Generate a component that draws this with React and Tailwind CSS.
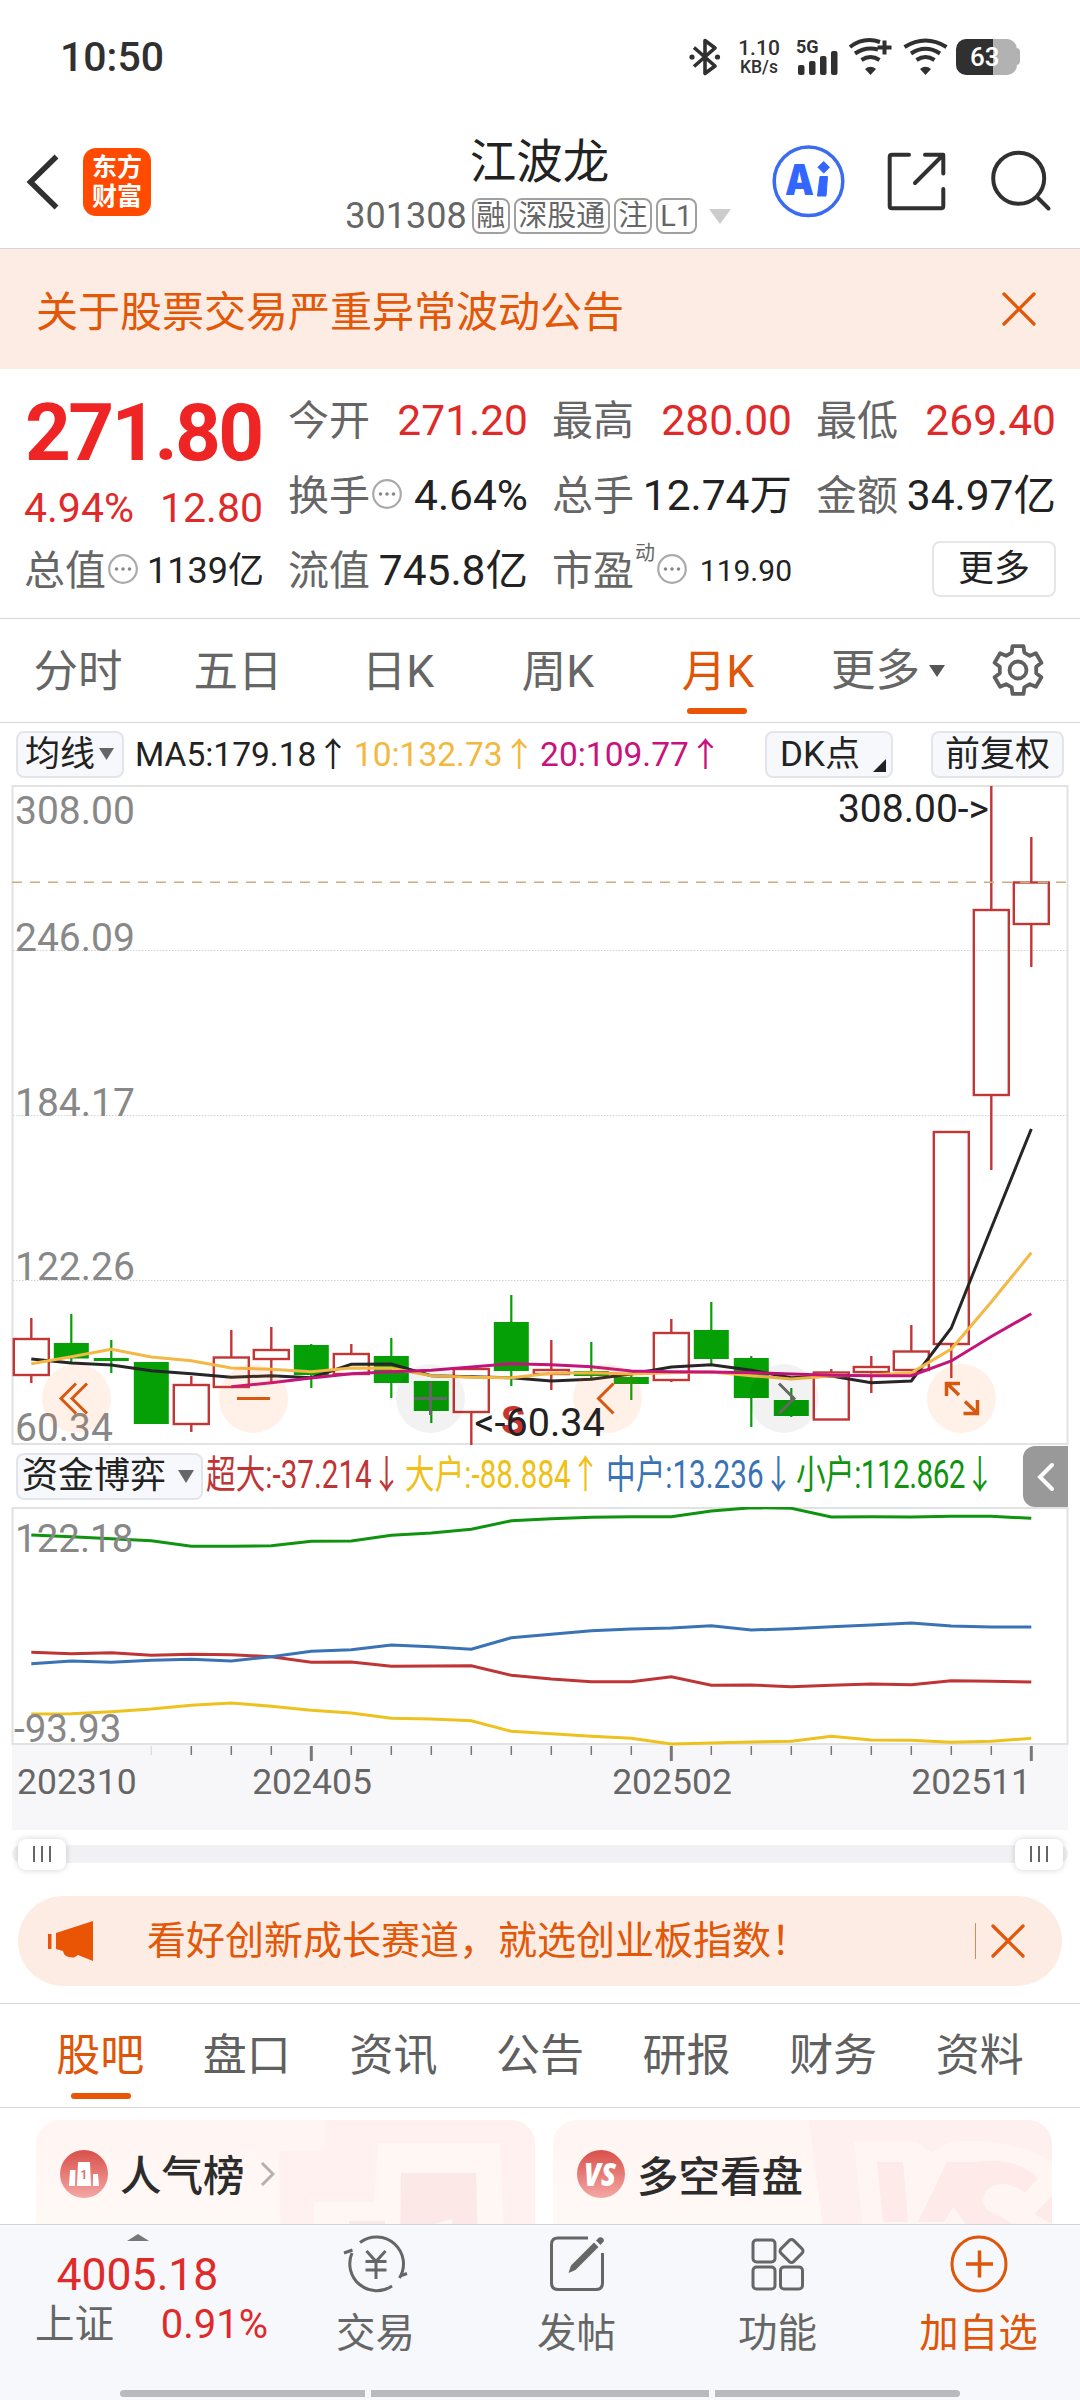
import React from "react";
import clsx from "clsx";

// x centre of the i-th candle
const cx = (i) => 31.3 + i * 40;

// [up, high, bodyTop, bodyBottom, low]
const candles = [
  [1, 1318, 1339, 1375, 1383],
  [0, 1314, 1343, 1358.5, 1362],
  [0, 1340, 1358, 1361, 1373],
  [0, 1362, 1362, 1424, 1424],
  [1, 1376, 1385, 1424, 1432],
  [1, 1330, 1357.5, 1387, 1387],
  [1, 1327, 1350, 1359, 1383],
  [0, 1344, 1345, 1375, 1388],
  [1, 1344, 1354, 1374, 1374],
  [0, 1338, 1356, 1383, 1398],
  [0, 1381, 1381, 1411, 1423],
  [1, 1369, 1369, 1412, 1445],
  [0, 1295, 1322, 1371, 1386],
  [1, 1340, 1370, 1374, 1390],
  [0, 1342, 1371, 1376, 1378],
  [0, 1375, 1377, 1384, 1400],
  [1, 1319, 1333, 1380, 1382],
  [0, 1302, 1330, 1359, 1365],
  [0, 1356, 1358, 1398, 1427],
  [0, 1388, 1400, 1416, 1417],
  [1, 1369, 1372.5, 1419.5, 1419.5],
  [1, 1356, 1367, 1372, 1393],
  [1, 1325, 1351.5, 1370, 1370],
  [1, 1132, 1132, 1344, 1378],
  [1, 786, 910, 1095, 1170],
  [1, 837, 882.5, 924, 967],
];

const ma5 = [1359, 1363, 1365, 1370.7, 1373.7, 1377.3, 1375.7, 1377.7, 1364.3, 1364, 1375.7, 1376.7, 1377.7, 1381, 1379.3, 1374, 1367, 1364.7, 1370.3, 1377.7, 1376, 1382.7, 1381, 1328, 1228, 1129];
const ma10 = [1363.7, 1356.7, 1349.3, 1357, 1360.7, 1368, 1369.3, 1371.7, 1368, 1368.3, 1375.7, 1377.3, 1377.7, 1373.3, 1372.7, 1374, 1372.7, 1372, 1375.7, 1379, 1376, 1375, 1372.7, 1349, 1302, 1252.7];
const ma20 = [1386.7, 1382.7, 1378, 1373.7, 1371.7, 1370.3, 1367, 1363.7, 1364.7, 1366.7, 1371, 1371.7, 1372, 1372.7, 1374, 1375.3, 1375.7, 1375.7, 1361, 1336.5, 1313.7];

const small = [27, 28.7, 30.7, 32.7, 38.3, 38.3, 37.7, 33.3, 33, 27.3, 25, 21.3, 12.7, 10.7, 9.3, 8.7, 8.7, 3, -0.3, 0.3, 9, 8.7, 9, 8.3, 8.3, 10.3];
const middle = [155.7, 153, 154.3, 152.3, 151.3, 153, 148.7, 143.3, 141.7, 137, 138.7, 141.3, 129.7, 126.3, 122.7, 121, 120, 117.7, 122, 120.7, 118.7, 117, 115, 118, 119, 119];
const huge = [144.3, 145.7, 144.7, 147.3, 146.3, 146.7, 148.7, 154.3, 154, 158.3, 158, 157.7, 167.3, 171, 173.7, 173.7, 168.7, 177.3, 177, 178.7, 177.3, 176, 176.7, 172.7, 173.3, 174];
const big = [206, 205.7, 203.7, 201, 197.3, 195, 198.3, 202.3, 205, 210.3, 211, 212.7, 223.3, 225.7, 228.3, 230.3, 236, 235, 234, 233.3, 228.3, 232, 232.3, 234.3, 233.3, 230.3];

const toPoints = (ys, from = 0) => ys.map((y, i) => `${cx(i + from)},${y}`).join(" ");

// Six-tooth gear outline around 0,0
const gearPath = () => {
  const pts = [];
  for (let t = 0; t < 6; t++) {
    [[-20, 18.5], [-13, 24.5], [13, 24.5], [20, 18.5]].forEach(([d, r]) => {
      const a = ((t * 60 + d - 90) * Math.PI) / 180;
      pts.push(`${(r * Math.cos(a)).toFixed(1)} ${(r * Math.sin(a)).toFixed(1)}`);
    });
  }
  return `M${pts.join("L")}Z`;
};

function Wifi({ plus }) {
  return (
    <svg width="46" height="38" viewBox="0 0 46 38" fill="none" stroke="#303030" strokeWidth="4">
      <path d={plus ? "M2 9 Q16 -1.500 32 4" : "M1.500 9 Q22.500 -4 43.500 9"} />
      <path d={plus ? "M7 15.500 Q18 8 30 11.500" : "M8 15.500 Q22.500 6 37 15.500"} />
      <path d="M13.500 22 Q22.500 16 31.500 22" />
      <path d="M22.500 37 L17 31 Q22.500 26.500 28 31 Z" fill="#303030" stroke="none" />
      {plus && <path d="M36.500 2.500 V16.500 M29.500 9.500 H43.500" />}
    </svg>
  );
}

function StatusBar() {
  return (
    <div className="h-[110px] shrink-0 flex items-start pt-[36px] pl-[60px] pr-[63px] text-[#303030]">
      <span className="text-[41px] leading-[42px] font-medium">10:50</span>
      <div className="ml-auto flex pt-[2px]">
        <svg width="32" height="38" viewBox="0 0 32 38" fill="none" stroke="#303030" strokeWidth="3.6">
          <path d="M5 9.500 L26 28 L16 35.500 V2.500 L26 10 L5 28.500" strokeLinejoin="round" />
          <circle cx="3" cy="19" r="2.600" fill="#303030" stroke="none" />
          <circle cx="28.500" cy="19" r="2.600" fill="#303030" stroke="none" />
        </svg>
        <div className="ml-[17px] w-[42px] flex flex-col items-center font-medium">
          <span className="text-[21px] leading-[20px]">1.10</span>
          <span className="mt-px text-[17.5px] leading-[17px]">KB/s</span>
        </div>
        <svg className="ml-[16px] overflow-visible" width="44" height="38" viewBox="0 0 44 38" fill="#303030">
          <text x="0" y="14.500" fontSize="18" fontWeight="700">5G</text>
          <rect x="2" y="27" width="6.500" height="10" rx="2" />
          <rect x="13" y="23" width="6.500" height="14" rx="2" />
          <rect x="24" y="18" width="6.500" height="19" rx="2" />
          <rect x="35" y="13" width="6.500" height="24" rx="2" />
        </svg>
        <div className="ml-[8px] flex gap-[9px]">
          <Wifi plus />
          <Wifi />
        </div>
        <div className="ml-[7px] mt-px w-[61px] h-[36px] relative flex items-center">
          <div className="w-[61px] h-[36px] rounded-[10px] overflow-hidden flex">
            <div className="w-[37px] bg-[#303030]" />
            <div className="flex-1 bg-[#b2b2b2]" />
          </div>
          <span className="absolute left-[14px] top-[4px] text-white text-[26px] leading-[28px] font-medium">63</span>
          <i className="absolute -right-[3px] top-[9px] w-[4px] h-[17px] rounded-r bg-[#b2b2b2]" />
        </div>
      </div>
    </div>
  );
}

function Tag({ children }) {
  return (
    <span className="h-[36px] px-[2.5px] rounded-[8px] border-2 border-[#a0a0a0] text-[29px] leading-[32px] flex items-center">
      {children}
    </span>
  );
}

function Header() {
  return (
    <header className="h-[139px] shrink-0 border-b border-[#d4d4da] grid grid-cols-[310px_460px_310px]">
      <div className="flex items-start pt-[38px] pl-[25px]">
        <svg width="36" height="68" viewBox="0 0 36 68" fill="none" stroke="#303030" strokeWidth="5.5">
          <path d="M31.500 8.500 L5.500 34 L31.500 59.500" />
        </svg>
        <div className="ml-[22px] w-[68px] h-[68px] rounded-[13px] bg-[#ff4a00] text-white text-[25px] leading-[29px] font-bold flex flex-col items-center justify-center">
          <span>东方</span>
          <span>财富</span>
        </div>
      </div>
      <div className="flex flex-col items-center">
        <h1 className="mt-[24px] -ml-[1px] text-[46.5px] leading-[56px] text-[#222]">江波龙</h1>
        <div className="mt-[8px] -ml-[4px] flex items-center gap-[4px] text-[#666]">
          <span className="text-[36px] leading-[36px] mr-[1px]">301308</span>
          <Tag>融</Tag>
          <Tag>深股通</Tag>
          <Tag>注</Tag>
          <Tag>L1</Tag>
          <svg className="ml-[8px]" width="22" height="16"><path d="M0 1 H22 L11 16 Z" fill="#ccc" /></svg>
        </div>
      </div>
      <svg width="310" height="138" viewBox="770 110 310 138" fill="none">
        <circle cx="808.500" cy="181.300" r="34.300" stroke="#3a6bf3" strokeWidth="3.500" />
        <text x="785" y="195" fontFamily="Inter" fontSize="42" fontWeight="900" fill="#3366ff" textLength="29" lengthAdjust="spacingAndGlyphs">A</text>
        <path d="M820 176.500 H827.500 L826 196 H817.500 Z M823.700 161.500 L829.500 167.300 L823.700 173.100 L817.900 167.300 Z" fill="#3366ff" stroke="#3366ff" strokeLinejoin="round" />
        <g stroke="#303030" strokeWidth="4" strokeLinecap="round" strokeLinejoin="round">
          <path d="M909 154.800 H892 Q889.700 154.800 889.700 157 V206 Q889.700 208.300 892 208.300 H941 Q943.300 208.300 943.300 206 V189" />
          <path d="M925 154.800 H943.300 V173.500 M943 155 L915 183" />
          <circle cx="1018.700" cy="178.300" r="25.500" />
          <path d="M1037.500 197.500 L1048.500 208.500" />
        </g>
      </svg>
    </header>
  );
}

function Close() {
  return (
    <svg width="34" height="34" viewBox="0 0 34 34" stroke="#e25708" strokeWidth="3.3" strokeLinecap="round">
      <path d="M2 2 L32 32 M32 2 L2 32" />
    </svg>
  );
}

function Info() {
  return (
    <svg className="shrink-0 ml-[1px] -mt-[4px]" width="32" height="32" viewBox="0 0 32 32">
      <circle cx="16" cy="16" r="13.800" fill="none" stroke="#aaa" strokeWidth="2.200" />
      <g fill="#888">
        <circle cx="9.500" cy="16" r="1.800" />
        <circle cx="16" cy="16" r="1.800" />
        <circle cx="22.500" cy="16" r="1.800" />
      </g>
    </svg>
  );
}

function Cell({ label, value, red, info }) {
  return (
    <div className="flex items-center justify-between h-[75px]">
      <span className="flex items-center text-[#666] text-[41px] -ml-[1px]">
        {label}
        {info && <Info />}
      </span>
      <span className={clsx("text-[42.5px]", red ? "text-[#e02a2a]" : "text-[#222]")}>{value}</span>
    </div>
  );
}

function Quote() {
  return (
    <section className="h-[250px] shrink-0 border-b border-[#d8d8d8] pt-[14px] pl-[25px] pr-[24px] grid grid-cols-[239px_239px_239px_239px] gap-x-[25px] leading-[50px] whitespace-nowrap">
      <div>
        <div className="h-[95px] pt-[5px] text-[80px] leading-[90px] font-bold tracking-[-2.7px] text-[#ef2525]">271.80</div>
        <div className="h-[55px] pt-[5px] w-[239px] flex justify-between text-[41px] text-[#e02a2a] -ml-px">
          <span>4.94%</span>
          <span>12.80</span>
        </div>
        <div className="flex items-center justify-between h-[75px] w-[239px]">
          <span className="flex items-center text-[#666] text-[41px] -ml-[1px]">总值<Info /></span>
          <span className="text-[36px] text-[#222]">1139亿</span>
        </div>
      </div>
      <div>
        <Cell label="今开" value="271.20" red />
        <Cell label="换手" value="4.64%" info />
        <Cell label="流值" value="745.8亿" />
      </div>
      <div>
        <Cell label="最高" value="280.00" red />
        <Cell label="总手" value="12.74万" />
        <div className="flex items-center justify-between h-[75px]">
          <span className="flex items-center text-[#666] text-[41px] -ml-[1px]">
            市盈
            <span className="text-[20px] leading-[20px] self-start -mt-[3px] ml-[1px]">动</span>
            <Info />
          </span>
          <span className="text-[30px] text-[#222]">119.90</span>
        </div>
      </div>
      <div>
        <Cell label="最低" value="269.40" red />
        <Cell label="金额" value="34.97亿" />
        <div className="h-[75px] flex items-center justify-end">
          <button className="w-[124px] h-[56px] -mt-[4px] rounded-[8px] border-2 border-[#e6e6e6] text-[36px] leading-[50px] text-[#222]">更多</button>
        </div>
      </div>
    </section>
  );
}

function PeriodTabs() {
  return (
    <nav className="h-[104px] shrink-0 border-b border-[#d8d8d8] flex text-[44.5px] leading-[106px] text-[#666]">
      <div className="flex -ml-[2px]">
        {["分时", "五日", "日K", "周K", "月K"].map((t) => (
          <div key={t} className={clsx("w-[160px] relative text-center", t === "月K" && "text-[#e05508]")}>
            {t}
            {t === "月K" && <i className="absolute left-[49px] top-[89px] w-[60px] h-[6px] rounded-full bg-[#e95504]" />}
          </div>
        ))}
      </div>
      <div className="ml-[33px] flex items-center">
        更多
        <svg className="ml-[9px]" width="16" height="12"><path d="M0 0 H16 L8 12 Z" fill="#555" /></svg>
      </div>
      <svg className="ml-auto mr-[35px] mt-[24px]" width="54" height="54" viewBox="-27 -27 54 54" fill="none" stroke="#606060" strokeWidth="3.8" strokeLinejoin="round">
        <path d={gearPath()} />
        <circle r="8.500" />
      </svg>
    </nav>
  );
}

const chip = "h-[47px] shrink-0 rounded-[8px] border-2 border-[#e3e5ea] bg-[#f6f8fb] flex items-center text-[#222]";

function MaRow() {
  return (
    <div className="h-[62px] shrink-0 flex items-center pl-[16px] pr-[16px] text-[33.5px] leading-[43px] whitespace-nowrap">
      <div className={clsx(chip, "w-[108px] pl-[7px] text-[35px]")}>
        均线
        <svg className="ml-[4px]" width="15" height="12"><path d="M0 0 H15 L7.500 12 Z" fill="#666" /></svg>
      </div>
      <div className="ml-[11px] flex gap-[4px]">
        <span className="text-[#222]">MA5:179.18↑</span>
        <span className="text-[#f2b83f]">10:132.73↑</span>
        <span className="text-[#c8127d]">20:109.77↑</span>
      </div>
      <div className={clsx(chip, "ml-auto w-[128px] pl-[13px] text-[35px] relative")}>
        DK点
        <svg className="absolute right-[5px] bottom-[4px]" width="13" height="13"><path d="M13 0 V13 H0 Z" fill="#222" /></svg>
      </div>
      <div className={clsx(chip, "ml-[38px] w-[133px] justify-center text-[35px]")}>前复权</div>
    </div>
  );
}

function CandleChart() {
  return (
    <svg className="block shrink-0 overflow-visible" width="1080" height="661" viewBox="0 785 1080 661" fill="none" fontSize="39">
      <rect x="12.500" y="786" width="1055" height="658" stroke="#e2e2e2" strokeWidth="2" />
      {[950.5, 1115.5, 1280.5].map((y) => (
        <path key={y} d={`M13 ${y} H1067`} stroke="#d2d2d2" strokeDasharray="1.500 1.500" />
      ))}
      <g fill="#888">
        <text x="15" y="824">308.00</text>
        <text x="15" y="951">246.09</text>
        <text x="15" y="1116">184.17</text>
        <text x="15" y="1280">122.26</text>
        <text x="15" y="1441">60.34</text>
      </g>
      {candles.map(([up, high, top, bottom, low], i) =>
        up ? (
          <g key={i} stroke="#c23636" strokeWidth="2.400">
            <path d={`M${cx(i)} ${high} V${top} M${cx(i)} ${bottom} V${low}`} />
            <rect x={cx(i) - 17.5} y={top} width="35" height={bottom - top} />
          </g>
        ) : (
          <g key={i} fill="#05a005">
            <rect x={cx(i) - 1.1} y={high} width="2.200" height={low - high} />
            <rect x={cx(i) - 17.5} y={top} width="35" height={bottom - top} />
          </g>
        )
      )}
      <path d="M12 882.300 H1067" stroke="#c9b083" strokeWidth="1.500" strokeDasharray="10 8" />
      <g strokeWidth="3">
        <polyline points={toPoints(ma5)} stroke="#262626" />
        <polyline points={toPoints(ma10)} stroke="#f3b845" />
        <polyline points={toPoints(ma20, 5)} stroke="#c4147c" />
      </g>
      {/* floating zoom and pan buttons */}
      {[76.5, 253.5, 430.5, 607.5, 784, 961.5].map((x, i) => (
        <circle key={x} cx={x} cy="1398.500" r="34.500" fill={i === 2 || i === 4 ? "#000" : "#ff6a1a"} fillOpacity={i === 2 || i === 4 ? 0.05 : 0.1} />
      ))}
      <g stroke="#d9580f" strokeWidth="3">
        <path d="M76 1383.500 L61 1398.500 L76 1413.500 M87 1383.500 L72 1398.500 L87 1413.500" />
        <path d="M237 1398.500 H270" />
        <path d="M613.500 1383.500 L598.500 1398.500 L613.500 1413.500" />
        <path d="M959 1395 L947 1383.500 M946.500 1396 V1383.500 H960 M965 1401.500 L977 1413 M977.500 1400 V1413.500 H963.500" strokeWidth="3.500" />
      </g>
      <g stroke="#666" strokeWidth="3">
        <path d="M414 1398.500 H447 M430.500 1382 V1415" />
        <path d="M779 1383.500 L794 1398.500 L779 1413.500" />
      </g>
      <text x="513" y="1434" fill="#cc3333" fontWeight="700" textAnchor="middle" fontSize="39">S</text>
      <g fill="#222">
        <text x="989" y="822" textAnchor="end">308.00-&gt;</text>
        <text x="474.500" y="1436" fontSize="39.500">&lt;-60.34</text>
      </g>
    </svg>
  );
}

function FlowItem({ children, className }) {
  return (
    <span className={clsx("shrink-0", className)}>
      <span className="inline-block origin-left scale-x-[0.76]">{children}</span>
    </span>
  );
}

function FlowRow() {
  return (
    <div className="h-[61px] shrink-0 flex pl-[16px] pr-[12px] pt-[7px] text-[39px] leading-[45px] whitespace-nowrap">
      <div className={clsx(chip, "w-[187px] pl-[4px] text-[36px]")}>
        资金博弈
        <svg className="ml-[12px]" width="16" height="13"><path d="M0 0 H16 L8 13 Z" fill="#666" /></svg>
      </div>
      <div className="flex ml-[3px]">
        <FlowItem className="w-[199px] text-[#bf3434]">超大:-37.214↓</FlowItem>
        <FlowItem className="w-[201px] text-[#f0c015]">大户:-88.884↑</FlowItem>
        <FlowItem className="w-[190px] text-[#3a73b5]">中户:13.236↓</FlowItem>
        <FlowItem className="w-[200px] text-[#109410] tracking-[-0.7px]">小户:112.862↓</FlowItem>
      </div>
      <div className="ml-auto -mt-[7px] w-[45px] h-[61px] rounded-l-[12px] bg-[#999] flex items-center justify-center">
        <svg width="20" height="30" viewBox="0 0 20 30" fill="none" stroke="#fff" strokeWidth="4" strokeLinecap="round">
          <path d="M16 3 L4 15 L16 27" />
        </svg>
      </div>
    </div>
  );
}

function FlowChart() {
  const ticks = Array.from({ length: 23 }, (_, k) => k + 3);
  return (
    <svg className="block shrink-0" width="1080" height="323" viewBox="0 -1 1080 323" fill="none" fontSize="38.500">
      <rect x="12" y="237" width="1056" height="85" fill="#f7f7fa" />
      <rect x="12.500" y="0" width="1055" height="236" stroke="#e2e2e2" strokeWidth="2" />
      <g strokeWidth="3">
        <polyline points={toPoints(small)} stroke="#109410" />
        <polyline points={toPoints(huge)} stroke="#bf3434" />
        <polyline points={toPoints(middle)} stroke="#3a73b5" />
        <polyline points={toPoints(big)} stroke="#edc21f" />
      </g>
      <text x="15" y="44" fill="#888">122.18</text>
      <text x="14" y="233.500" fill="#888">-93.93</text>
      {ticks.map((i) => {
        const major = i % 9 === 7;
        return <path key={i} d={`M${cx(i)} 238 V${major ? 253 : 247}`} stroke={i === 3 ? "#ddd" : "#777"} strokeWidth={major ? 3 : 1.5} />;
      })}
      <g fill="#666" fontSize="35.500">
        <text x="17" y="286">202310</text>
        <text x="312" y="286" textAnchor="middle">202405</text>
        <text x="672" y="286" textAnchor="middle">202502</text>
        <text x="1031" y="286" textAnchor="end">202511</text>
      </g>
    </svg>
  );
}

function Grip() {
  return (
    <div className="w-[48px] h-[31px] rounded-[8px] bg-white shadow-[0_0_6px_rgba(0,0,0,0.18)] flex items-center justify-center gap-[6px]">
      <i className="w-[2px] h-[16px] bg-[#666]" />
      <i className="w-[2px] h-[16px] bg-[#666]" />
      <i className="w-[2px] h-[16px] bg-[#666]" />
    </div>
  );
}

function RangeSlider() {
  return (
    <div className="h-[66px] shrink-0 px-[12px] pt-[15px]">
      <div className="h-[18px] rounded-full bg-[#f1f1f4] flex items-center justify-between pl-[6px] pr-[5px]">
        <Grip />
        <Grip />
      </div>
    </div>
  );
}

function Promo() {
  return (
    <div className="h-[90px] shrink-0 mx-[18px] pl-[29px] pr-[37px] rounded-full bg-[#fdece3] flex items-center text-[39px] text-[#e25708]">
      <svg width="46" height="40" viewBox="0 0 46 40" fill="#e95504">
        <path d="M1 13 H4.500 V28 H1 Z M9 12 L46 0 V40 L31 34 L27 36.500 Q17 37 16 30 L9 28 Z" />
      </svg>
      <span className="ml-[54px] whitespace-nowrap">看好创新成长赛道，就选创业板指数！</span>
      <i className="ml-auto mr-[15px] w-[1.500px] h-[36px] bg-[#d98a5c]" />
      <Close />
    </div>
  );
}

function SectionTabs() {
  return (
    <nav className="mt-[17px] h-[105px] shrink-0 border-y border-[#d8d8d8] px-[27px] grid grid-cols-7 text-center text-[44px] leading-[105px] text-[#606060]">
      {["股吧", "盘口", "资讯", "公告", "研报", "财务", "资料"].map((t, i) => (
        <div key={t} className={clsx("relative", i === 0 && "text-[#e05508]")}>
          {t}
          {i === 0 && <i className="absolute left-[44px] top-[89px] w-[60px] h-[6px] rounded-full bg-[#e95504]" />}
        </div>
      ))}
    </nav>
  );
}

function Cards() {
  return (
    <div className="h-[116px] shrink-0 pt-[12px] pl-[36px] pr-[28px] flex gap-[18px] overflow-hidden text-[41.5px] font-medium text-[#2c2c2c]">
      <div className="relative w-[499px] h-[130px] rounded-[24px] overflow-hidden bg-linear-to-b from-[#fff5f3] to-[#fffaf7]">
        <svg className="absolute inset-0" width="499" height="130">
          <path d="M290 0 H499 V130 H245 L243 31 H289 Z" fill="#fef1ef" />
          <path d="M342 23 H464 L469 130 H278 V82 H338 Z" fill="#fff7f4" />
          <path d="M365 53 H440 L442 130 H364 Z M313 101 H349 V130 H313 Z" fill="#fce8e6" />
          <path d="M398 104 L416 99 V104 Z" fill="#fff7f4" />
        </svg>
        <div className="relative flex items-center h-[108px] pl-[24px]">
          <svg width="48" height="48" viewBox="0 0 48 48">
            <defs>
              <linearGradient id="badge" x1="0" y1="0" x2="0" y2="1">
                <stop offset="0" stopColor="#d94f4a" />
                <stop offset="1" stopColor="#f4a8a4" />
              </linearGradient>
            </defs>
            <circle cx="24" cy="24" r="24" fill="url(#badge)" />
            <path d="M10 20 H15.500 L15 36 H9 Z M18 12 H30 L31 36 H17 Z M33 24 H38 L39 36 H33 Z" fill="#fff" />
            <text x="24" y="28.500" fontSize="12" fontWeight="700" fill="#e0706b" textAnchor="middle">1</text>
          </svg>
          <span className="ml-[12px] mt-[7px]">人气榜</span>
          <svg className="ml-[15px]" width="15" height="26" viewBox="0 0 15 26" fill="none" stroke="#b5b0ae" strokeWidth="3">
            <path d="M2 2 L13 13 L2 24" />
          </svg>
        </div>
      </div>
      <div className="relative w-[499px] h-[130px] rounded-[24px] overflow-hidden bg-linear-to-b from-[#fff5f3] to-[#fffaf7]">
        <svg className="absolute inset-0" width="499" height="130">
          <path d="M256 0 H499 V130 H273 Z" fill="#fef0ee" />
          <path d="M301 22 H364 L379 33 L395 22 Q460 16 499 42 V130 H312 Z" fill="#fff5f3" />
          <path d="M324 42 H350 L355 102 H330 Z M394 42 H422 Q462 36 485 58 L472 73 Q450 56 434 70 Q422 88 448 97 L460 104 H413 L400 87 L391 102 H365 Z M499 76 L481 94 L499 104 Z" fill="#fdeae9" />
        </svg>
        <div className="relative flex items-center h-[108px] pl-[24px]">
          <svg width="48" height="48" viewBox="0 0 48 48">
            <circle cx="24" cy="24" r="24" fill="url(#badge)" />
            <text x="23" y="35.500" fontFamily="Open Sans" fontSize="31" fontWeight="800" fontStyle="italic" fill="#fff" textAnchor="middle" textLength="32" lengthAdjust="spacingAndGlyphs">VS</text>
          </svg>
          <span className="ml-[12px] mt-[8px]">多空看盘</span>
        </div>
      </div>
    </div>
  );
}

const navIcons = {
  交易: (
    <>
      <path d="M14 7.500 A27 27 0 0 1 53.500 43 M54 41 L61 38.500 M46 51 A27 27 0 0 1 6 18 M-2 18 L6.500 15" transform="translate(-1 0)" />
      <path d="M19.500 16 L29 26.500 L38.500 16 M18.500 26.500 H39.500 M18.500 35 H39.500 M29 26.500 V44" />
    </>
  ),
  发帖: (
    <>
      <path d="M40 3 H10 Q3.500 3 3.500 9.500 V48 Q3.500 54.500 10 54.500 H48 Q54.500 54.500 54.500 48 V18" />
      <path d="M48 5.500 L51 2.500 Q55.500 1.500 56 6 L52.500 10 Z M46 7.500 L50.500 12 L27.500 35 L20.500 38 L23 30.500 Z" fill="#666" stroke="none" />
    </>
  ),
  功能: (
    <>
      <rect x="4" y="5" width="22" height="22" rx="3.500" />
      <rect x="4" y="32" width="22" height="22" rx="3.500" />
      <rect x="31.500" y="32" width="22" height="22" rx="3.500" />
      <rect x="33.500" y="7" width="18" height="18" rx="3" transform="rotate(45 42.500 16)" />
    </>
  ),
  加自选: (
    <>
      <circle cx="29" cy="29" r="27" />
      <path d="M16 29 H43 M29.500 15.500 V42.500" strokeWidth="3.500" />
    </>
  ),
};

function BottomNav() {
  return (
    <footer className="h-[176px] shrink-0 border-t border-[#d2d4d8] bg-[#f6f8fb] flex flex-col">
      <div className="h-[165px] flex">
        <div className="w-[275px] flex flex-col items-center text-[#e02a2a]">
          <svg className="mt-[9px]" width="22" height="8"><path d="M11 0 L22 7 H0 Z" fill="#777" /></svg>
          <span className="mt-[8px] text-[44.5px] leading-[50px]">4005.18</span>
          <div className="mt-[1px] w-[231px] ml-[28px] flex justify-between leading-[48px]">
            <span className="text-[39.5px] -ml-px text-[#666]">上证</span>
            <span className="text-[40px] -mr-px">0.91%</span>
          </div>
        </div>
        {Object.keys(navIcons).map((name) => (
          <div
            key={name}
            className={clsx("w-[201px] flex flex-col items-center pt-[10px] text-[39.5px] leading-[50px]", name === "加自选" ? "text-[#e05508]" : "text-[#666]")}
          >
            <svg className="overflow-visible" width="58" height="58" viewBox="0 0 58 58" fill="none" stroke="currentColor" strokeWidth="3">
              {navIcons[name]}
            </svg>
            <span className="mt-[16px]">{name}</span>
          </div>
        ))}
      </div>
      <div className="flex gap-[6px] pl-[120px]">
        <i className="w-[245px] h-[7px] rounded-l-full bg-[#b9babc]" />
        <i className="w-[338px] h-[7px] bg-[#b9babc]" />
        <i className="w-[245px] h-[7px] rounded-r-full bg-[#b9babc]" />
      </div>
    </footer>
  );
}

export default function App() {
  return (
    <div className="w-[1080px] h-[2400px] overflow-hidden flex flex-col bg-white font-[Roboto,'Noto_Sans_CJK_SC',sans-serif]">
      <StatusBar />
      <Header />
      <div className="h-[120px] shrink-0 pl-[36px] pr-[44px] bg-[#fdece3] flex items-center justify-between text-[42px] text-[#e25708]">
        <span className="mt-[6px]">关于股票交易严重异常波动公告</span>
        <Close />
      </div>
      <Quote />
      <PeriodTabs />
      <MaRow />
      <CandleChart />
      <FlowRow />
      <FlowChart />
      <RangeSlider />
      <Promo />
      <SectionTabs />
      <Cards />
      <BottomNav />
    </div>
  );
}
